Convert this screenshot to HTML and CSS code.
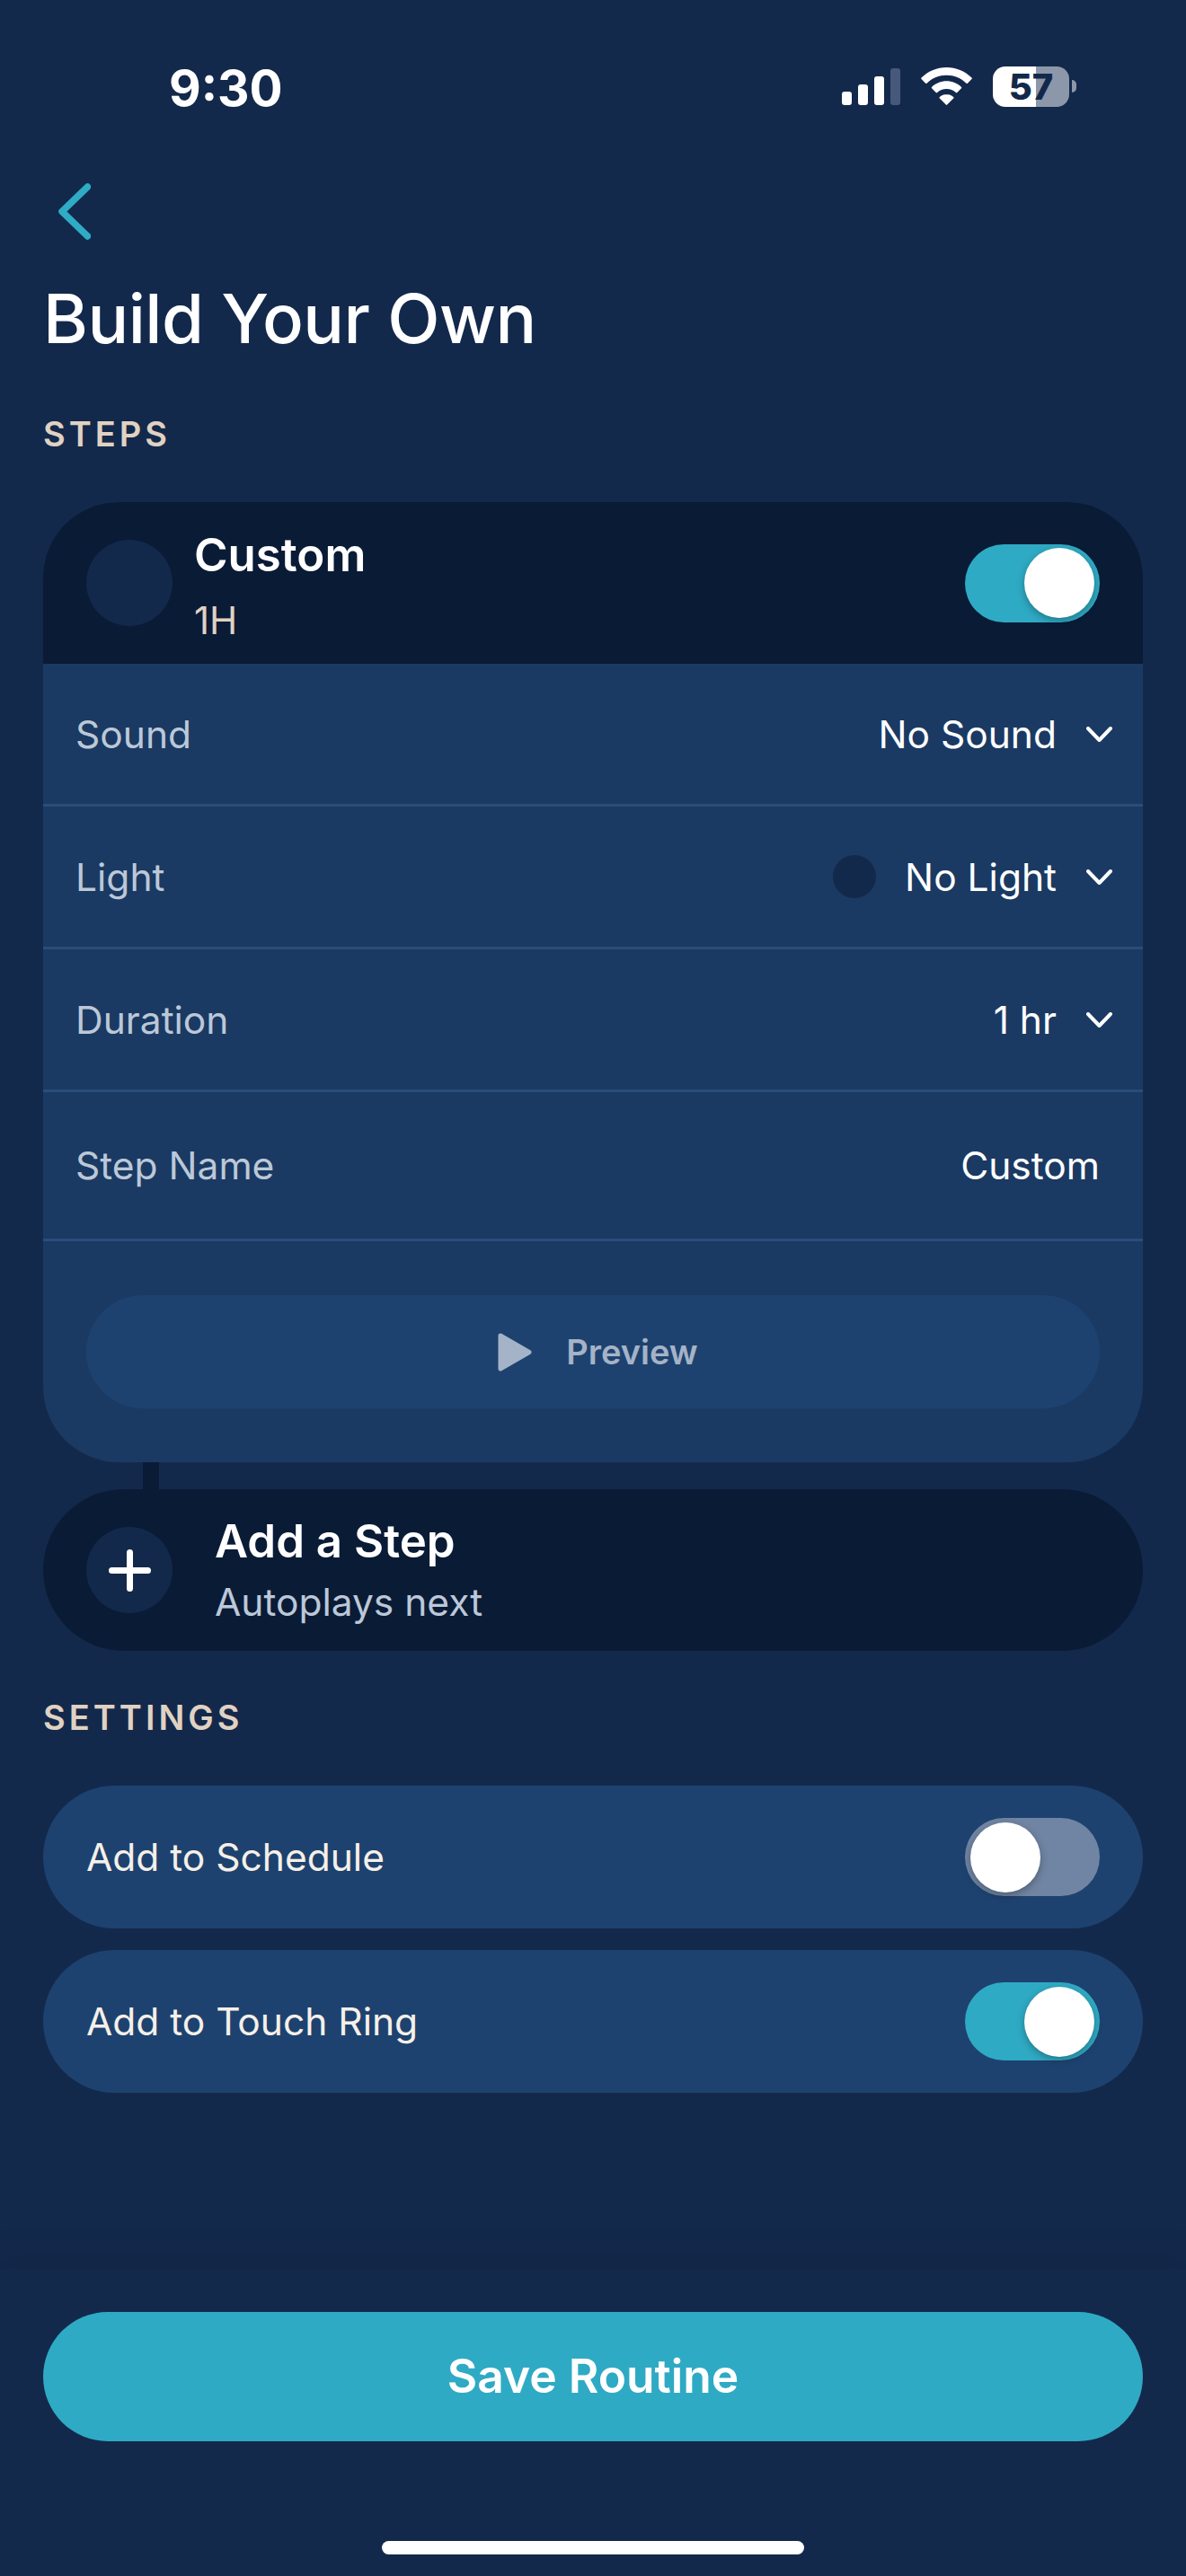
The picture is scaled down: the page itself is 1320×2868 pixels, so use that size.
FILE: index.html
```html
<!DOCTYPE html>
<html lang="en">
<head>
 <meta charset="UTF-8">
 <meta name="viewport" content="width=device-width, initial-scale=1">
 <title>Build Your Own</title>
 <link rel="stylesheet" href="styles.css">
</head>
<body>
 <div class="screen">
  <div class="status-bar">
   <span class="status-time">9:30</span>
   <div class="status-icons">
    <svg class="signal" width="65" height="41" viewBox="0 0 65 41">
     <rect x="0" y="26" width="11" height="15" rx="3" fill="#fff"/>
     <rect x="18" y="18" width="11" height="23" rx="3" fill="#fff"/>
     <rect x="36" y="9" width="11" height="32" rx="3" fill="#fff"/>
     <rect x="54" y="0" width="11" height="41" rx="3" fill="#47597a"/>
    </svg>
    <svg class="wifi" width="57" height="42" viewBox="0 0 57 42">
     <path d="M28.5 0C18 0 8.300 4.100 0.500 11.500a1 1 0 0 0 0 1.400l4.600 4.800a1 1 0 0 0 1.400 0C12.500 12 20.200 8.800 28.500 8.800s16 3.200 22 8.900a1 1 0 0 0 1.400 0l4.600-4.800a1 1 0 0 0 0-1.400C48.700 4.100 39 0 28.500 0z" fill="#fff"/>
     <path d="M28.500 15.300c-6.300 0-12 2.400-16.500 6.600a1 1 0 0 0 0 1.400l4.700 4.800a1 1 0 0 0 1.400 0c2.800-2.600 6.400-4.100 10.400-4.100s7.600 1.500 10.400 4.100a1 1 0 0 0 1.400 0l4.700-4.800a1 1 0 0 0 0-1.400c-4.500-4.200-10.200-6.600-16.500-6.600z" fill="#fff"/>
     <path d="M28.500 30c-3 0-5.600 1.100-7.700 3a1 1 0 0 0 0 1.400l7 7.200a1 1 0 0 0 1.400 0l7-7.200a1 1 0 0 0 0-1.400c-2.100-1.900-4.700-3-7.700-3z" fill="#fff"/>
    </svg>
    <div class="battery">
     <div class="battery-body"><span class="battery-text">57</span></div>
     <div class="battery-nub"></div>
    </div>
   </div>
  </div>

  <div class="back-row">
   <svg width="36" height="63" viewBox="0 0 36 63">
    <path d="M32.500 4L4 31.500L32.500 59" fill="none" stroke="#2fabc5" stroke-width="7.500" stroke-linecap="round" stroke-linejoin="round"/>
   </svg>
  </div>

  <h1 class="page-title">Build Your Own</h1>

  <div class="section-label steps-label">STEPS</div>

  <div class="step-card">
   <div class="step-head">
    <div class="icon-circle"></div>
    <div class="step-text">
     <div class="step-name">Custom</div>
     <div class="step-time">1H</div>
    </div>
    <div class="toggle on"><div class="knob"></div></div>
   </div>

   <div class="option-row">
    <span class="option-label">Sound</span>
    <div class="option-value">
     <span>No Sound</span>
     <svg class="chevron" width="29" height="17" viewBox="0 0 29 17"><path d="M2 2L14.500 15L27 2" fill="none" stroke="#fff" stroke-width="4" stroke-linecap="round" stroke-linejoin="round"/></svg>
    </div>
   </div>
   <div class="option-row">
    <span class="option-label">Light</span>
    <div class="option-value">
     <span class="light-dot"></span>
     <span>No Light</span>
     <svg class="chevron" width="29" height="17" viewBox="0 0 29 17"><path d="M2 2L14.500 15L27 2" fill="none" stroke="#fff" stroke-width="4" stroke-linecap="round" stroke-linejoin="round"/></svg>
    </div>
   </div>
   <div class="option-row">
    <span class="option-label">Duration</span>
    <div class="option-value">
     <span>1 hr</span>
     <svg class="chevron" width="29" height="17" viewBox="0 0 29 17"><path d="M2 2L14.500 15L27 2" fill="none" stroke="#fff" stroke-width="4" stroke-linecap="round" stroke-linejoin="round"/></svg>
    </div>
   </div>
   <div class="option-row name-row">
    <span class="option-label">Step Name</span>
    <div class="option-value"><span>Custom</span></div>
   </div>

   <div class="preview-wrap">
    <div class="preview-btn">
     <svg width="38" height="43" viewBox="0 0 38 43"><path d="M3 3L35 21.500L3 40z" fill="#a4b3c7" stroke="#a4b3c7" stroke-width="5" stroke-linejoin="round"/></svg>
     <span>Preview</span>
    </div>
   </div>
  </div>

  <div class="connector"></div>

  <div class="add-step">
   <div class="icon-circle">
    <svg width="47" height="47" viewBox="0 0 47 47"><path d="M23.500 3.500V43.500M3.500 23.500H43.500" fill="none" stroke="#fff" stroke-width="7" stroke-linecap="round"/></svg>
   </div>
   <div class="add-text">
    <div class="add-title">Add a Step</div>
    <div class="add-sub">Autoplays next</div>
   </div>
  </div>

  <div class="section-label settings-label">SETTINGS</div>

  <div class="setting-row">
   <span>Add to Schedule</span>
   <div class="toggle off"><div class="knob"></div></div>
  </div>
  <div class="setting-row">
   <span>Add to Touch Ring</span>
   <div class="toggle on"><div class="knob"></div></div>
  </div>

  <div class="footer">
   <div class="save-btn">Save Routine</div>
   <div class="home-bar"></div>
  </div>
 </div>
</body>
</html>
```

FILE: styles.css
```css
:root {
 --bg: #13294b;
 --dark: #0a1b36;
 --panel: #1a3a63;
 --raised: #1e426f;
 --line: #2a4d7a;
 --teal: #2faac4;
 --beige: #e0d2c3;
 --muted: #bcc8d8;
}

html,
body {
 margin: 0;
 padding: 0;
 background: var(--bg);
}

.screen {
 width: 1320px;
 height: 2868px;
 overflow: hidden;
 display: flex;
 flex-direction: column;
 background: var(--bg);
 color: #fff;
 font-family: "Inter", sans-serif;
}

/* status bar */
.status-bar {
 height: 44px;
 margin-top: 74px;
 display: flex;
 justify-content: space-between;
 align-items: center;
 padding: 0 122px 0 188px;
}

.status-time {
 font-size: 55px;
 font-weight: 700;
 line-height: 44px;
 margin-top: 4px;
}

.status-icons {
 display: flex;
 align-items: center;
 gap: 23px;
}

.battery {
 display: flex;
 align-items: center;
 gap: 3px;
}

.battery-body {
 width: 85px;
 height: 45px;
 border-radius: 14px;
 background: linear-gradient(to right, #fff 48px, #8c98aa 48px);
 display: flex;
 align-items: center;
 justify-content: center;
}

.battery-text {
 font-size: 40px;
 font-weight: 800;
 color: var(--bg);
 line-height: 45px;
}

.battery-nub {
 width: 5px;
 height: 14px;
 border-radius: 0 5px 5px 0;
 background: #8c98aa;
}

.back-row {
 height: 63px;
 margin-top: 86px;
 padding-left: 65px;
}

.page-title {
 margin: 47px 0 0 48px;
 font-size: 76px;
 font-weight: 500;
 line-height: 80px;
 letter-spacing: -0.500px;
}

.section-label {
 margin-left: 48px;
 font-size: 38px;
 font-weight: 600;
 line-height: 40px;
 letter-spacing: 4px;
 color: var(--beige);
}

.steps-label {
 margin-top: 69px;
}

/* step card */
.step-card {
 margin: 56px 48px 0;
 background: var(--panel);
 border-radius: 84px;
 overflow: hidden;
 flex-shrink: 0;
}

.step-head {
 height: 180px;
 box-sizing: border-box;
 padding: 0 48px;
 background: var(--dark);
 display: flex;
 align-items: center;
}

.icon-circle {
 width: 96px;
 height: 96px;
 border-radius: 50%;
 background: var(--bg);
 flex-shrink: 0;
 display: flex;
 align-items: center;
 justify-content: center;
}

.step-text {
 margin-left: 24px;
 padding-top: 6px;
 flex-grow: 1;
}

.step-name {
 font-size: 51px;
 font-weight: 600;
 line-height: 60px;
}

.step-time {
 margin-top: 18px;
 font-size: 42px;
 line-height: 50px;
 color: var(--beige);
}

.toggle {
 width: 150px;
 height: 87px;
 box-sizing: border-box;
 border-radius: 44px;
 display: flex;
 align-items: center;
 padding: 0 6px;
 flex-shrink: 0;
}

.toggle.on {
 background: var(--teal);
 justify-content: flex-end;
}

.toggle.off {
 background: #7085a3;
}

.knob {
 width: 78px;
 height: 78px;
 border-radius: 50%;
 background: #fff;
 box-shadow: 0 3px 8px rgba(0, 0, 0, 0.3);
}

.option-row {
 height: 156px;
 border-bottom: 3px solid var(--line);
 display: flex;
 justify-content: space-between;
 align-items: center;
 padding: 0 34px 0 36px;
 font-size: 42.500px;
}

.name-row {
 height: 163px;
 padding-right: 48px;
}

.option-label {
 color: var(--muted);
}

.option-value {
 display: flex;
 align-items: center;
}

.chevron {
 margin-left: 33px;
}

.light-dot {
 width: 48px;
 height: 48px;
 border-radius: 50%;
 background: var(--bg);
 margin-right: 32px;
}

.preview-wrap {
 padding: 60px 48px;
}

.preview-btn {
 height: 126px;
 padding-left: 11px;
 border-radius: 63px;
 background: var(--raised);
 display: flex;
 align-items: center;
 justify-content: center;
 gap: 38px;
 font-size: 38px;
 font-weight: 600;
 color: #a4b3c7;
}

.connector {
 width: 18px;
 height: 30px;
 margin-left: 159px;
 background: var(--dark);
 flex-shrink: 0;
}

.add-step {
 height: 180px;
 margin: 0 48px;
 padding: 0 48px;
 box-sizing: border-box;
 flex-shrink: 0;
 background: var(--dark);
 border-radius: 90px;
 display: flex;
 align-items: center;
}

.add-text {
 margin-left: 47px;
}

.add-title {
 font-size: 51px;
 font-weight: 600;
 line-height: 60px;
}

.add-sub {
 margin-top: 12px;
 font-size: 42.500px;
 line-height: 52px;
 color: var(--muted);
}

.settings-label {
 margin-top: 54px;
 margin-bottom: 56px;
}

.setting-row {
 height: 159px;
 margin: 0 48px 24px;
 padding: 0 48px;
 flex-shrink: 0;
 background: var(--raised);
 border-radius: 80px;
 display: flex;
 justify-content: space-between;
 align-items: center;
 font-size: 42.500px;
 color: #f5f0e8;
}

/* footer with save button */
.footer {
 margin-top: auto;
 height: 342px;
 display: flex;
 flex-direction: column;
 align-items: center;
 box-shadow: 0 -1px 40px rgba(10, 27, 54, 0.25);
}

.save-btn {
 width: 1224px;
 height: 144px;
 box-sizing: border-box;
 padding-bottom: 3px;
 margin-top: 48px;
 border-radius: 72px;
 background: var(--teal);
 display: flex;
 align-items: center;
 justify-content: center;
 font-size: 51.500px;
 font-weight: 600;
}

.home-bar {
 width: 470px;
 height: 15px;
 margin-top: 111px;
 border-radius: 8px;
 background: #fff;
}
```
